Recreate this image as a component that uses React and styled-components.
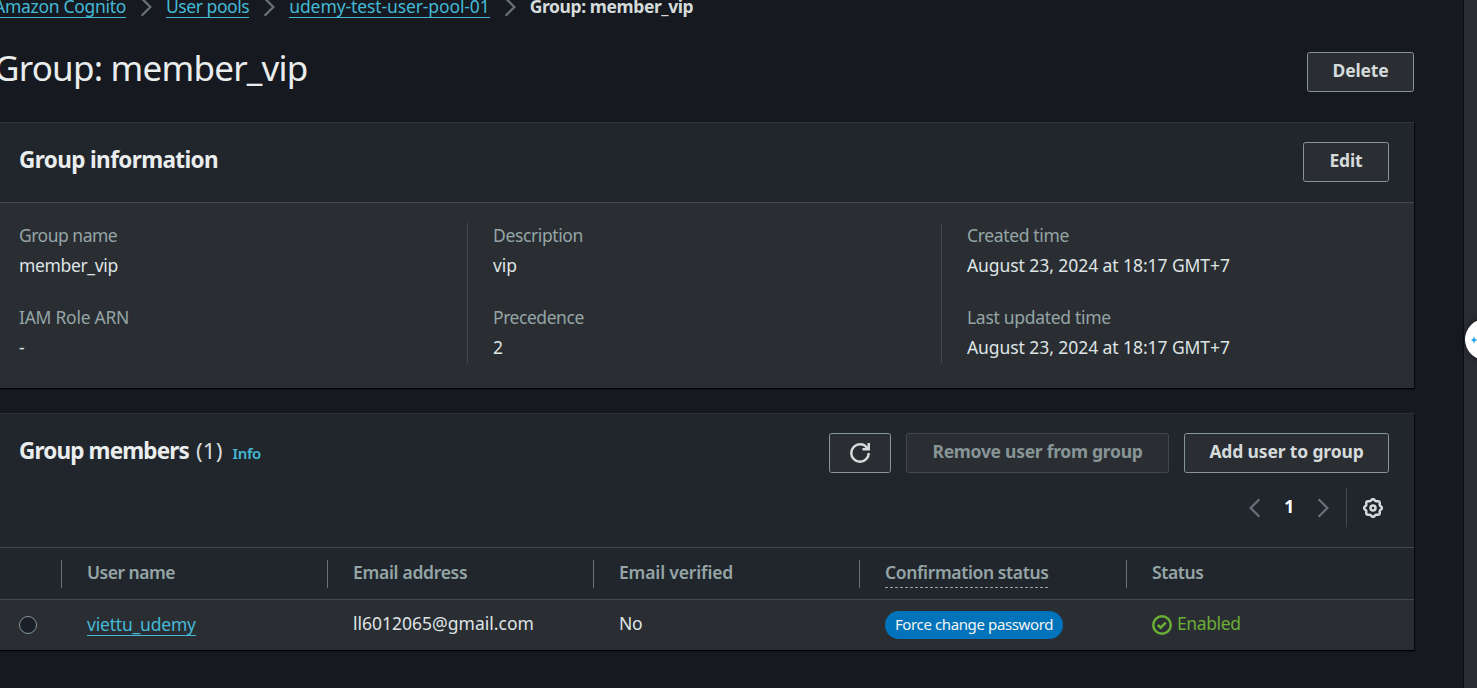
import React from "react";
import styled, { createGlobalStyle } from "styled-components";

const GlobalStyle = createGlobalStyle`
  *, *::before, *::after { box-sizing: border-box; }
  body {
    margin: 0;
    overflow: hidden;
    background: #16191f;
    color: #dfe4e4;
    font-family: "Noto Sans", "Open Sans", sans-serif;
    font-size: 17.5px;
    line-height: 27.5px;
    letter-spacing: -0.38px;
  }
`;

const Shell = styled.div`
  display: flex;
  height: 688px;
  width: 1477px;
  overflow: hidden;
`;

const Main = styled.main`
  width: 1463px;
  flex: none;
  padding-right: 49px;
`;

const SidePanel = styled.aside`
  position: relative;
  flex: 1;
  background: #2a2e33;
  border-left: 1px solid #0d0f12;
`;

const AssistantBubble = styled.div`
  position: absolute;
  top: 319px;
  left: 1px;
  width: 41px;
  height: 41px;
  border-radius: 50%;
  background: #fff;
  box-shadow: 0 0 8px rgba(0, 0, 0, 0.45);
  display: flex;
  align-items: center;
  padding-left: 5px;
`;

const Content = styled.div`
  display: flex;
  flex-direction: column;
  margin-left: -6px;
  width: 1420px;
`;

const Track = styled.span`
  letter-spacing: ${(p) => p.$by}px;
  white-space: nowrap;
`;

const Breadcrumbs = styled.nav`
  display: flex;
  align-items: center;
  gap: 10px;
  height: 28px;
  margin-top: -7px;
  color: #687078;
`;

const Link = styled.a`
  display: inline-block;
  color: #44b9d6;
  letter-spacing: ${(p) => p.$by}px;
  line-height: 18px;
  height: 21px;
  border-bottom: 1px solid #44b9d6;
  white-space: nowrap;
`;

const CurrentCrumb = styled.span`
  font-weight: 700;
  color: #d5dbdb;
  letter-spacing: -0.4px;
`;

const TitleRow = styled.header`
  display: flex;
  justify-content: space-between;
  align-items: flex-start;
  height: 101px;
  padding-top: 31px;
`;

const Title = styled.h1`
  margin: -7px 0 0;
  font-size: 35px;
  line-height: 45px;
  font-weight: 400;
  letter-spacing: -0.78px;
  color: #eaeded;
`;

const Button = styled.button`
  display: flex;
  align-items: center;
  justify-content: center;
  width: ${(p) => p.$width}px;
  height: 40px;
  padding: 0 0 4px;
  border: 1px solid ${(p) => (p.disabled ? "#414750" : "#879596")};
  border-radius: 2.5px;
  background: #2a2e33;
  color: ${(p) => (p.disabled ? "#879596" : "#d5dbdb")};
  font: 700 17.5px/25px "Noto Sans", "Open Sans", sans-serif;
  letter-spacing: ${(p) => p.$by ?? -0.15}px;
`;

const IconButton = styled(Button)`
  padding: 0;
`;

const Card = styled.section`
  background: #2a2e33;
  border-top: 1px solid #2e3337;
  box-shadow: 0 1px 1px #000, 1px 1px 1px rgba(0, 0, 0, 0.5);
  margin-bottom: 25px;
`;

const CardHeader = styled.div`
  background: #21252c;
  border-bottom: 1px solid #414750;
  height: ${(p) => p.$height}px;
  padding: 19px 25px 0;
`;

const HeaderLine = styled.div`
  display: flex;
  justify-content: space-between;
  align-items: flex-start;
`;

const CardTitle = styled.h2`
  margin: 4px 0 0;
  font-size: 22.5px;
  line-height: 28px;
  font-weight: 700;
  letter-spacing: ${(p) => p.$by}px;
  color: #eaeded;
`;

const Count = styled.span`
  font-weight: 400;
  letter-spacing: 0.1px;
  color: #d5dbdb;
  margin-left: 7px;
`;

const InfoLink = styled.a`
  font-size: 15px;
  font-weight: 600;
  letter-spacing: -0.4px;
  color: #44b9d6;
  margin-left: 10px;
`;

const Actions = styled.div`
  display: flex;
  gap: 15px;
`;

const InfoGrid = styled.div`
  display: grid;
  grid-template-columns: 448px 474px 1fr;
  padding: 20px 25px 25px;
`;

const InfoColumn = styled.div`
  display: flex;
  flex-direction: column;
  gap: 24px;
  height: 140px;
  padding-left: ${(p) => (p.$divided ? 25 : 0)}px;
  border-left: ${(p) => (p.$divided ? "1px solid #414750" : "none")};
`;

const Field = styled.dl`
  display: flex;
  flex-direction: column;
  gap: 6px;
  margin: 0;
`;

const FieldLabel = styled.dt`
  color: #95a5a6;
  line-height: 24px;
`;

const FieldValue = styled.dd`
  margin: 0;
  line-height: 24px;
  height: 28px;
`;

const Pagination = styled.div`
  display: flex;
  justify-content: flex-end;
  align-items: center;
  height: 39px;
  margin-top: 15px;
  padding-right: 6px;
  color: #687078;
`;

const PageNumber = styled.span`
  width: 48px;
  padding-bottom: 1px;
  text-align: center;
  font-weight: 700;
  color: #fff;
`;

const Settings = styled.div`
  display: flex;
  align-items: center;
  height: 39px;
  margin-left: 13px;
  padding-left: 16px;
  border-left: 1px solid #414750;
  color: #d5dbdb;
`;

const TableRow = styled.div`
  display: grid;
  grid-template-columns: 67px 266px 266px 266px 267px 1fr;
  align-items: center;
  height: ${(p) => (p.$head ? 52 : 50)}px;
  background: ${(p) => (p.$head ? "#21252c" : "#2a2e33")};
  border-bottom: ${(p) => (p.$head ? "1px solid #414750" : "none")};
`;

const HeadCell = styled.div`
  height: 28px;
  line-height: 24px;
  padding-left: 25px;
  border-left: 1px solid #687078;
  font-weight: 600;
  color: #95a5a6;
`;

const Dashed = styled.span`
  display: inline-block;
  border-bottom: 1px dashed #95a5a6;
  height: 28px;
  line-height: 24px;
`;

const Cell = styled.div`
  display: flex;
  align-items: center;
  height: 50px;
  padding-left: 26px;
  padding-bottom: ${(p) => (p.$text ? 2 : 0)}px;
`;

const RadioCell = styled.div`
  padding-left: 25px;
  display: flex;
`;

const Radio = styled.span`
  width: 18px;
  height: 18px;
  border-radius: 50%;
  border: 1px solid #879596;
  background: #1a2029;
`;

const Badge = styled.span`
  display: flex;
  align-items: center;
  justify-content: center;
  width: 178px;
  height: 28px;
  border-radius: 14px;
  background: #0073bb;
  color: #f2f3f3;
  font-size: 15px;
  letter-spacing: -0.38px;
`;

const Status = styled.span`
  display: flex;
  align-items: center;
  gap: 5px;
  color: #6aaf35;
`;

const StatusLabel = styled.span`
  padding-bottom: 2px;
`;

const Icon = styled.svg`
  display: block;
  flex: none;
  width: 20px;
  height: 20px;
  fill: none;
  stroke: currentColor;
  stroke-width: ${(p) => p.$weight ?? 2};
`;

const ChevronRight = () => (
  <Icon viewBox="0 0 16 16" $weight={1.8}><path d="M4.5 1l7 7-7 7" /></Icon>
);
const ChevronLeft = () => (
  <Icon viewBox="0 0 16 16" $weight={1.8}><path d="M11.5 1l-7 7 7 7" /></Icon>
);
const Refresh = () => (
  <Icon viewBox="0 0 16 16">
    <path d="M15 8c0 3.87-3.13 7-7 7s-7-3.13-7-7 3.13-7 7-7c2.79 0 5.2 1.63 6.33 4" />
    <path d="M15 0v5l-5-.04" />
  </Icon>
);
const Positive = () => (
  <Icon viewBox="0 0 16 16"><circle cx="8" cy="8" r="7" /><path d="M4.6 8l2.3 2.2 4.1-4.1" /></Icon>
);

const gearOutline = Array.from({ length: 96 }, (_, i) => {
  const a = (i / 96) * Math.PI * 2;
  const r = 6.5 + 0.6 * Math.cos(8 * a);
  return `${i ? "L" : "M"}${(8 + r * Math.cos(a)).toFixed(2)} ${(8 + r * Math.sin(a)).toFixed(2)}`;
}).join("") + "Z";

const Gear = () => (
  <Icon viewBox="0 0 16 16"><path d={gearOutline} /><circle cx="8" cy="8" r="2" /></Icon>
);

const Sparkle = styled(Icon)`
  width: 8px;
  height: 8px;
  fill: #2aa5ea;
  stroke: none;
`;

const columns = [
  [["Group name", "member_vip", -0.5, -0.35], ["IAM Role ARN", "-", -0.27, 0]],
  [["Description", "vip", -0.38, -0.1], ["Precedence", "2", -0.45, 0]],
  [
    ["Created time", "August 23, 2024 at 18:17 GMT+7", -0.35, -0.07],
    ["Last updated time", "August 23, 2024 at 18:17 GMT+7", -0.3, -0.07],
  ],
];

export default function App() {
  return (
    <>
      <GlobalStyle />
      <Shell>
        <Main>
          <Content>
            <Breadcrumbs>
              <Link $by={-0.3}>Amazon Cognito</Link>
              <ChevronRight />
              <Link $by={-0.44}>User pools</Link>
              <ChevronRight />
              <Link $by={-0.11}>udemy-test-user-pool-01</Link>
              <ChevronRight />
              <CurrentCrumb>Group: member_vip</CurrentCrumb>
            </Breadcrumbs>

            <TitleRow>
              <Title>Group: member_vip</Title>
              <Button $width={107}>Delete</Button>
            </TitleRow>

            <Card>
              <CardHeader $height={80}>
                <HeaderLine>
                  <CardTitle $by={-0.61}>Group information</CardTitle>
                  <Button $width={86}>Edit</Button>
                </HeaderLine>
              </CardHeader>
              <InfoGrid>
                {columns.map((fields, i) => (
                  <InfoColumn key={i} $divided={i > 0}>
                    {fields.map(([label, value, labelTrack, valueTrack]) => (
                      <Field key={label}>
                        <FieldLabel><Track $by={labelTrack}>{label}</Track></FieldLabel>
                        <FieldValue><Track $by={valueTrack}>{value}</Track></FieldValue>
                      </Field>
                    ))}
                  </InfoColumn>
                ))}
              </InfoGrid>
            </Card>

            <Card>
              <CardHeader $height={134}>
                <HeaderLine>
                  <CardTitle $by={-0.85}>
                    Group members<Count>(1)</Count><InfoLink>Info</InfoLink>
                  </CardTitle>
                  <Actions>
                    <IconButton $width={62} aria-label="Refresh"><Refresh /></IconButton>
                    <Button $width={263} $by={-0.28} disabled>Remove user from group</Button>
                    <Button $width={205}>Add user to group</Button>
                  </Actions>
                </HeaderLine>
                <Pagination>
                  <ChevronLeft />
                  <PageNumber>1</PageNumber>
                  <ChevronRight />
                  <Settings><Gear /></Settings>
                </Pagination>
              </CardHeader>
              <TableRow $head>
                <span />
                <HeadCell><Track $by={-0.5}>User name</Track></HeadCell>
                <HeadCell><Track $by={-0.3}>Email address</Track></HeadCell>
                <HeadCell><Track $by={-0.15}>Email verified</Track></HeadCell>
                <HeadCell><Dashed>Confirmation status</Dashed></HeadCell>
                <HeadCell>Status</HeadCell>
              </TableRow>
              <TableRow>
                <RadioCell><Radio /></RadioCell>
                <Cell><Link $by={-0.2}>viettu_udemy</Link></Cell>
                <Cell $text><Track $by={0}>ll6012065@gmail.com</Track></Cell>
                <Cell $text>No</Cell>
                <Cell><Badge>Force change password</Badge></Cell>
                <Cell><Status><Positive /><StatusLabel>Enabled</StatusLabel></Status></Cell>
              </TableRow>
            </Card>
          </Content>
        </Main>
        <SidePanel>
          <AssistantBubble>
            <Sparkle viewBox="0 0 8 8"><path d="M4 0Q4.3 3.7 8 4Q4.3 4.3 4 8Q3.7 4.3 0 4Q3.7 3.7 4 0Z" /></Sparkle>
          </AssistantBubble>
        </SidePanel>
      </Shell>
    </>
  );
}
